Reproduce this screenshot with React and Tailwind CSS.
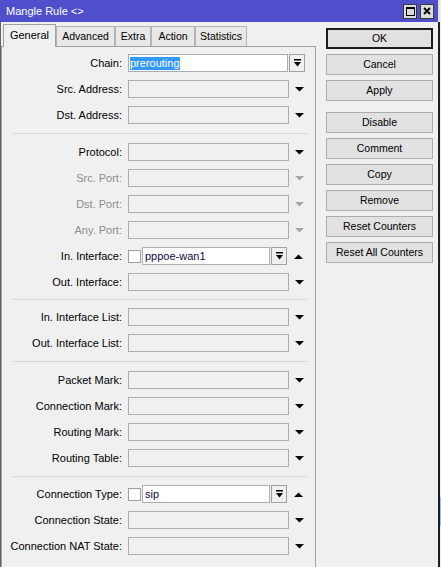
import React from 'react';

function DownArrow({ disabled }) {
  return (
    <svg width="9" height="5" viewBox="0 0 9 5">
      <polygon points="0,0 9,0 4.5,4.5" fill={disabled ? '#a6a6a6' : '#000'} />
    </svg>
  );
}

function UpArrow() {
  return (
    <svg width="9" height="5" viewBox="0 0 9 5">
      <polygon points="0,5 9,5 4.5,0.5" fill="#000" />
    </svg>
  );
}

function DropButton() {
  return (
    <div className="ml-px w-[16px] h-[18px] border border-[#a0a0a0] bg-[#f0f0f0] flex items-center justify-center">
      <svg width="7" height="8" viewBox="0 0 7 8">
        <rect x="0" y="0" width="7" height="1.5" fill="#000" />
        <polygon points="0,3 7,3 3.5,7.5" fill="#000" />
      </svg>
    </div>
  );
}

function Row({ label, disabled, children }) {
  return (
    <div className="flex items-center h-[26px]">
      <div className={`w-[120px] shrink-0 text-right ${disabled ? 'text-[#8d8d8d]' : 'text-black'}`}>
        {label}:
      </div>
      <div className="ml-[6px] flex items-center">{children}</div>
    </div>
  );
}

function Combo({ label, disabled }) {
  return (
    <Row label={label} disabled={disabled}>
      <div className="w-[161px] h-[18px] border border-[#abadb3] bg-[#f0f0f0]" />
      <div className="w-[20px] flex justify-center">
        <DownArrow disabled={disabled} />
      </div>
    </Row>
  );
}

function NegField({ label, value }) {
  return (
    <Row label={label}>
      <div className="w-[13px] h-[13px] border border-[#a0a0a0] bg-white" />
      <div className="ml-px w-[128px] h-[18px] border border-[#abadb3] bg-white pl-[2px] flex items-center text-[#0c0c40]">
        {value}
      </div>
      <DropButton />
      <div className="w-[23px] flex justify-center">
        <UpArrow />
      </div>
    </Row>
  );
}

function Separator({ h }) {
  return (
    <div className={`${h} flex items-center`}>
      <div className="ml-[10px] w-[295px] h-px bg-[#d6d6d6]" />
    </div>
  );
}

const tabs = [
  { name: 'Advanced', w: 'w-[59px]' },
  { name: 'Extra', w: 'w-[36px]' },
  { name: 'Action', w: 'w-[44px]' },
  { name: 'Statistics', w: 'w-[52px]' },
];

const buttons = ['Disable', 'Comment', 'Copy', 'Remove', 'Reset Counters', 'Reset All Counters'];

function Btn({ children, primary }) {
  return (
    <button
      className={`w-[107px] h-[21px] bg-[#e1e1e1] text-[10.5px] text-black flex items-center justify-center ${
        primary ? 'border-2 border-[#1c1c1c]' : 'border border-[#adadad]'
      }`}
    >
      {children}
    </button>
  );
}

export default function App() {
  return (
    <div className="w-[441px] h-[567px] overflow-hidden flex bg-[#f0f0f0] font-['Liberation_Sans',Arial,sans-serif] text-[11px] leading-none select-none">
      <div className="w-[440px] flex flex-col">
        {/* title bar */}
        <div className="h-[22px] flex shrink-0">
          <div className="w-[438px] bg-[#4f4fcb] flex items-center pl-[6px] pr-[4px]">
            <span className="text-white text-[11px]">Mangle Rule &lt;&gt;</span>
            <div className="ml-auto flex gap-[3px]">
              <div className="w-[14px] h-[15px] border border-[#3a3a3a] bg-[#dcdcdc] flex items-center justify-center">
                <div className="w-[9px] h-[9px] border border-black border-t-2" />
              </div>
              <div className="w-[14px] h-[15px] border border-[#3a3a3a] bg-[#dcdcdc] flex items-center justify-center">
                <svg width="8" height="8" viewBox="0 0 8 8">
                  <path d="M1 1 L7 7 M7 1 L1 7" stroke="#000" strokeWidth="1.8" />
                </svg>
              </div>
            </div>
          </div>
          <div className="w-[2px] bg-[#e4e4e4]" />
        </div>

        <div className="flex flex-1 border-r-2 border-[#1e1e1e]">
          {/* left pane */}
          <div className="w-[316px] shrink-0 border-l border-[#646464] flex flex-col">
            <div className="h-[24px] flex items-end pl-[2px]">
              <div className="relative z-10 -mb-px w-[53px] h-[23px] border border-b-0 border-[#a0a0a0] bg-[#f0f0f0] flex items-center justify-center pb-[2px]">
                General
              </div>
              {tabs.map((t) => (
                <div
                  key={t.name}
                  className={`${t.w} h-[20px] border border-b-0 border-[#b4b4b4] bg-[#e8e8e8] flex items-center justify-center text-[10.5px]`}
                >
                  {t.name}
                </div>
              ))}
            </div>
            <div className="flex-1 border-t border-l border-r border-[#a0a0a0] pt-[3px]">
              <Row label="Chain">
                <div className="w-[160px] h-[18px] border border-[#abadb3] bg-white pl-px flex items-center">
                  <span className="bg-[#3399ff] text-white h-[13px] flex items-center">prerouting</span>
                </div>
                <DropButton />
              </Row>
              <Combo label="Src. Address" />
              <Combo label="Dst. Address" />
              <Separator h="h-[11px]" />
              <Combo label="Protocol" />
              <Combo label="Src. Port" disabled />
              <Combo label="Dst. Port" disabled />
              <Combo label="Any. Port" disabled />
              <NegField label="In. Interface" value="pppoe-wan1" />
              <Combo label="Out. Interface" />
              <Separator h="h-[9px]" />
              <Combo label="In. Interface List" />
              <Combo label="Out. Interface List" />
              <Separator h="h-[11px]" />
              <Combo label="Packet Mark" />
              <Combo label="Connection Mark" />
              <Combo label="Routing Mark" />
              <Combo label="Routing Table" />
              <Separator h="h-[10px]" />
              <NegField label="Connection Type" value="sip" />
              <Combo label="Connection State" />
              <Combo label="Connection NAT State" />
            </div>
          </div>

          {/* right pane */}
          <div className="flex-1 pl-[10px] pt-[6px] flex flex-col">
            <div className="flex flex-col gap-[5px]">
              <Btn primary>OK</Btn>
              <Btn>Cancel</Btn>
              <Btn>Apply</Btn>
            </div>
            <div className="mt-[11px] flex flex-col gap-[5px]">
              {buttons.map((b) => (
                <Btn key={b}>{b}</Btn>
              ))}
            </div>
          </div>
        </div>
      </div>

      {/* edge of the window behind */}
      <div className="w-px flex flex-col">
        <div className="h-[497px] bg-[#ececec]" />
        <div className="h-[29px] bg-[#99c4ee]" />
        <div className="flex-1 bg-[#ececec]" />
      </div>
    </div>
  );
}
